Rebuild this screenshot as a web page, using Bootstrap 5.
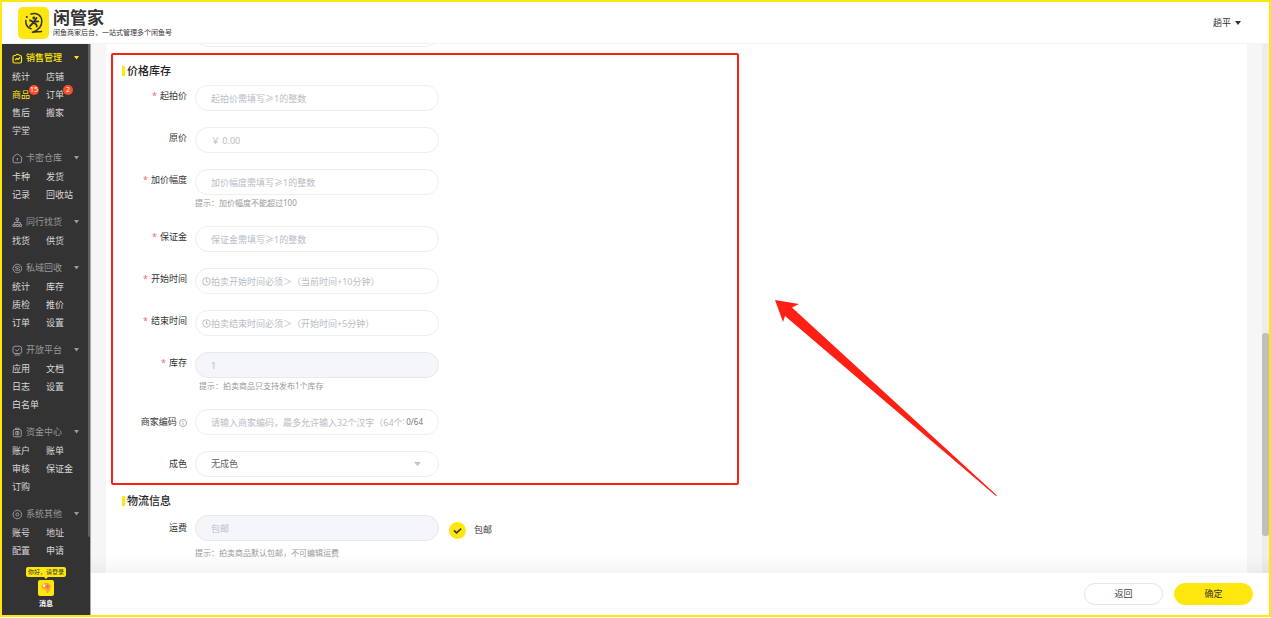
<!DOCTYPE html>
<html lang="zh-CN">
<head>
<meta charset="utf-8">
<meta name="viewport" content="width=device-width, initial-scale=1">
<title>闲管家</title>
<link href="https://cdn.jsdelivr.net/npm/bootstrap@5.3.0/dist/css/bootstrap.min.css" rel="stylesheet">
<style>
  :root { --brand: #ffe60f; --line: #eceef0; --ink: #333; --ghost: #b9bdc6; --alert: #ff2015; }
  body { font-family: "Noto Sans", "Noto Sans CJK SC", sans-serif; font-size: 9px; line-height: 18px; color: var(--ink); background: #fff; }
  a { text-decoration: none; color: inherit; }
  .app-wrap { height: 100vh; padding-bottom: 1px; }
  .app { height: 100%; border: 2px solid var(--brand); }

  .topbar { height: 42px; padding: 0 28px 0 16px; border-bottom: 1px solid #f3f3f3; }
  .brand-text { padding-top: 3px; }
  .brand-name { font-size: 17px; line-height: 18px; font-weight: 700; }
  .brand-sub { font-size: 7px; line-height: 12px; }
  .user-menu { font-size: 9px; line-height: 18px; color: var(--ink); }

  .side { width: 89px; background: #333; color: #d8d8d8; border-right: 1px solid #aaa; }
  .side-thumb { width: 2px; height: 493px; background: #606060; right: 0; top: 0; border-radius: 0 0 1px 1px; }
  .side-nav { padding: 4px 12px 0 10px; }
  .side-group { margin-bottom: 8px; }
  .side-head { height: 20px; color: #999; width: 67px; gap: 3px; }
  .side-head.active { color: var(--brand); font-weight: 500; }
  .side-links { display: grid; grid-template-columns: 34px 1fr; grid-auto-rows: 18px; white-space: nowrap; }
  .side-links a.active { color: var(--brand); }
  .count { position: absolute; top: -1px; left: 17px; min-width: 10px; height: 10px; border-radius: 5px; background: #ff4d26; color: #fff; font-size: 7px; line-height: 10px; text-align: center; }
  .bubble { background: var(--brand); color: #333; font-size: 6px; line-height: 10px; padding: 0 2px; border-radius: 2px; }
  .bubble-tip { border: 2px solid transparent; border-top-color: var(--brand); border-bottom: 0; margin-bottom: 1px; }
  .msg { font-size: 7px; line-height: 10px; color: #fff; font-weight: 700; padding-bottom: 6px; }
  .msg svg { margin-bottom: 3px; }

  .stage { background: #f6f6f6; min-height: 0; padding-left: 15px; }
  .sheet { background: #fff; margin-right: 15px; }
  .track { width: 7px; background: #ededed; padding-top: 289px; }
  .thumb { height: 203px; background: #bfbfbf; border-radius: 3px; }
  .fade-edge { height: 18px; bottom: 0; background: linear-gradient(rgba(0,0,0,0), rgba(0,0,0,.04)); pointer-events: none; }

  .peek { height: 3px; padding-left: 89px; }
  .peek-field { width: 244px; }
  .panel { margin-left: 5px; border: 2px solid transparent; width: 55%; }
  .panel.marked { border-color: var(--alert); border-radius: 2px; margin-top: 6px; padding: 6px 0; }
  .sec-title { font-size: 11px; line-height: 20px; margin: 0 0 4px 9px; font-weight: 500; color: #222; }
  .sec-title::before { content: ""; width: 3px; height: 10px; background: var(--brand); margin-right: 2px; }
  .item { display: grid; grid-template-columns: 74px 244px auto; column-gap: 8px; margin-bottom: 16px; }
  .item:last-child { margin-bottom: 0; }
  .item > label:first-child { text-align: right; line-height: 22px; }
  .item.level > label:first-child { line-height: 26px; }
  .need::before { content: "*"; color: #f56c6c; margin-right: 3px; }
  .pill { height: 26px; min-height: 26px; border: 1px solid var(--line); border-radius: 13px; font-size: 9px; line-height: 18px; padding: 0 15px; color: #666; width: 100%; }
  .pill::placeholder { color: var(--ghost); opacity: 1; }
  .pill:disabled { background: #f4f6fa; color: var(--ghost); border-color: #e6e8ec; }
  .pill.counted { padding-right: 34px; }
  select.pill { background-image: url("data:image/svg+xml,%3csvg xmlns='http://www.w3.org/2000/svg' viewBox='0 0 7 4'%3e%3cpath fill='%23c0c4cc' d='M0 0h7L3.5 4z'/%3e%3c/svg%3e"); background-size: 7px 4px; background-position: right 17px center; }
  .inner-icon { position: absolute; left: 7px; top: 9px; }
  .inner-count { position: absolute; right: 16px; top: 4px; font-size: 8px; color: #777; }
  .hint { font-size: 8px; line-height: 15px; color: #999; }
  .hint.inset { padding-left: 4px; }
  .free { height: 26px; padding-left: 2px; margin-top: 2px; }
  .free .form-check-input { width: 17px; height: 17px; margin: 0; border: 0; border-radius: 50%; }
  .free .form-check-input:checked { background-color: var(--brand); background-size: 15px; background-image: url("data:image/svg+xml,%3csvg xmlns='http://www.w3.org/2000/svg' viewBox='0 0 15 15'%3e%3cpath fill='none' stroke='%23333' stroke-width='1.6' d='M4 7.4l2.5 2.4L11.2 5.6'/%3e%3c/svg%3e"); }

  .arrow { left: 773px; top: 298px; pointer-events: none; }
  .foot { height: 42px; padding-right: 16px; gap: 11px; background: #fff; }
  .act { width: 79px; height: 22px; border-radius: 11px; font-size: 9px; line-height: 18px; padding: 0; border: 1px solid #e3e5e8; background: #fff; color: #444; }
  .act.main { background: var(--brand); border-color: var(--brand); color: #333; }
</style>
</head>
<body>
<div class="app-wrap">
<div class="app d-flex flex-column position-relative overflow-hidden">
  <header class="topbar d-flex align-items-center justify-content-between flex-shrink-0">
    <a href="#" class="d-flex align-items-center">
      <svg width="31" height="32" viewBox="0 0 31 32" class="me-1 flex-shrink-0" aria-hidden="true">
        <rect width="31" height="32" rx="5" fill="#ffe60f"/>
        <g fill="none" stroke="#333" stroke-linecap="round" stroke-linejoin="round">
          <path stroke-width="1.500" d="M7.800 13.500C7.600 17.500 9.500 20.800 13 21.800M13 7C18.500 5 23.600 8.500 23.800 14C24 19.500 20 23.300 14.500 25.200C17.500 24.300 20.500 24.800 23.500 24.600"/>
          <path stroke-width="1.800" d="M18.500 11L15.500 15.500L12 19M12 13.300L15.500 14.800L20.300 14.300M15.500 15.800L18.300 17.500L18.800 19.500"/>
        </g>
        <circle cx="15.800" cy="11" r="1.400" fill="#333"/><circle cx="8.800" cy="10" r="1" fill="#333"/>
      </svg>
      <span class="brand-text d-flex flex-column">
        <span class="brand-name">闲管家</span>
        <span class="brand-sub">闲鱼商家后台，一站式管理多个闲鱼号</span>
      </span>
    </a>
    <button type="button" class="user-menu btn p-0 border-0 d-flex align-items-center gap-1">趟平
      <svg width="6" height="4" viewBox="0 0 6 4" aria-hidden="true"><path d="M0 0h6L3 4z" fill="#333"/></svg>
    </button>
  </header>

  <div class="d-flex flex-grow-1" style="min-height:0">
    <aside class="side d-flex flex-column position-relative flex-shrink-0">
      <div class="side-thumb position-absolute"></div>
      <nav class="side-nav">
        <div class="side-group">
          <div class="side-head active d-flex align-items-center">
            <svg width="11" height="11" viewBox="0 0 11 11" fill="none" stroke="currentColor" stroke-width="1.200"><path d="M3.500 2.500H2.500Q1 2.500 1 4V8.500Q1 10 2.500 10H8Q9.500 10 9.500 8.500V4Q9.500 2.500 8 2.500H7.500M3.500 2.500Q5.500 0 7.500 2.500M3 7L4.800 5.500L6 6.500L8 4.500"/></svg>
            <span class="flex-grow-1">销售管理</span>
            <svg width="5" height="4" viewBox="0 0 5 4"><path d="M0 0h5L2.500 3.500z" fill="currentColor"/></svg>
          </div>
          <div class="side-links">
            <a href="#">统计</a><a href="#">店铺</a>
            <a href="#" class="active position-relative">商品<span class="count">15</span></a><a href="#" class="position-relative">订单<span class="count">2</span></a>
            <a href="#">售后</a><a href="#">搬家</a>
            <a href="#">学堂</a>
          </div>
        </div>
        <div class="side-group">
          <div class="side-head d-flex align-items-center">
            <svg width="11" height="11" viewBox="0 0 11 11" fill="none" stroke="currentColor"><path d="M1 5Q1 4 2 3.200L4.300 1.500Q5.300.8 6.300 1.500L8.600 3.200Q9.600 4 9.600 5V8Q9.600 9.800 7.800 9.800H2.800Q1 9.800 1 8zM5.300 5v2.500"/></svg>
            <span class="flex-grow-1">卡密仓库</span>
            <svg width="5" height="4" viewBox="0 0 5 4"><path d="M0 0h5L2.500 3.500z" fill="currentColor"/></svg>
          </div>
          <div class="side-links"><a href="#">卡种</a><a href="#">发货</a><a href="#">记录</a><a href="#">回收站</a></div>
        </div>
        <div class="side-group">
          <div class="side-head d-flex align-items-center">
            <svg width="11" height="11" viewBox="0 0 11 11" fill="none" stroke="currentColor"><path d="M4 1.200h2.500v2.300H4zM5.300 3.500v2M2.300 7.500V5.500h6v2M1 7.500h2.300v2H1zM4.200 7.500h2.200v2H4.200zM7.300 7.500h2.300v2H7.300z"/></svg>
            <span class="flex-grow-1">同行找货</span>
            <svg width="5" height="4" viewBox="0 0 5 4"><path d="M0 0h5L2.500 3.500z" fill="currentColor"/></svg>
          </div>
          <div class="side-links"><a href="#">找货</a><a href="#">供货</a></div>
        </div>
        <div class="side-group">
          <div class="side-head d-flex align-items-center">
            <svg width="11" height="11" viewBox="0 0 11 11" fill="none" stroke="currentColor"><circle cx="5.300" cy="5.500" r="4.300"/><path d="M3.300 5V3.800h3.500q.8 0 .8 1M7.400 6v1.200H4q-.8 0-.8-1M4.300 5.500h2"/></svg>
            <span class="flex-grow-1">私域回收</span>
            <svg width="5" height="4" viewBox="0 0 5 4"><path d="M0 0h5L2.500 3.500z" fill="currentColor"/></svg>
          </div>
          <div class="side-links"><a href="#">统计</a><a href="#">库存</a><a href="#">质检</a><a href="#">推价</a><a href="#">订单</a><a href="#">设置</a></div>
        </div>
        <div class="side-group">
          <div class="side-head d-flex align-items-center">
            <svg width="11" height="11" viewBox="0 0 11 11" fill="none" stroke="currentColor"><rect x="1" y="1.200" width="8.600" height="7.300" rx="2"/><path d="M3.300 4.700L5 6.200L7.600 3.500M2.500 10h5.600"/></svg>
            <span class="flex-grow-1">开放平台</span>
            <svg width="5" height="4" viewBox="0 0 5 4"><path d="M0 0h5L2.500 3.500z" fill="currentColor"/></svg>
          </div>
          <div class="side-links"><a href="#">应用</a><a href="#">文档</a><a href="#">日志</a><a href="#">设置</a><a href="#">白名单</a></div>
        </div>
        <div class="side-group">
          <div class="side-head d-flex align-items-center">
            <svg width="11" height="11" viewBox="0 0 11 11" fill="none" stroke="currentColor"><path d="M3.500 2.500V1.200h3.600v1.300"/><rect x="1.300" y="2.500" width="8" height="7.300" rx="1.500"/><path d="M3.800 4.500h3v3.300h-3zM5.300 4.500v3.300"/></svg>
            <span class="flex-grow-1">资金中心</span>
            <svg width="5" height="4" viewBox="0 0 5 4"><path d="M0 0h5L2.500 3.500z" fill="currentColor"/></svg>
          </div>
          <div class="side-links"><a href="#">账户</a><a href="#">账单</a><a href="#">审核</a><a href="#">保证金</a><a href="#">订购</a></div>
        </div>
        <div class="side-group mb-0">
          <div class="side-head d-flex align-items-center">
            <svg width="11" height="11" viewBox="0 0 11 11" fill="none" stroke="currentColor"><circle cx="5.300" cy="5.500" r="4.300"/><circle cx="5.300" cy="5.500" r="1.500"/></svg>
            <span class="flex-grow-1">系统其他</span>
            <svg width="5" height="4" viewBox="0 0 5 4"><path d="M0 0h5L2.500 3.500z" fill="currentColor"/></svg>
          </div>
          <div class="side-links"><a href="#">账号</a><a href="#">地址</a><a href="#">配置</a><a href="#">申请</a></div>
        </div>
      </nav>
      <a href="#" class="msg mt-auto d-flex flex-column align-items-center">
        <span class="bubble fw-normal">你好，请登录</span>
        <span class="bubble-tip"></span>
        <svg width="16" height="16" viewBox="0 0 16 16" aria-hidden="true"><rect width="16" height="16" rx="2" fill="#ffe60f"/><path d="M3.500 6Q5 2.500 9 3Q13 3.500 12.500 7.500Q12 11.500 8.500 13.500Q9.500 11 8 9.500Q4 9.500 3.500 6z" fill="#ff9a3c"/><circle cx="6" cy="5.800" r="1.300" fill="#fff"/><circle cx="9.500" cy="6.500" r="1.200" fill="#ff5a3c"/></svg>
        <span>消息</span>
      </a>
    </aside>

    <div class="d-flex flex-column flex-grow-1" style="min-width:0">
      <main class="stage d-flex flex-grow-1 position-relative overflow-hidden">
        <form class="sheet flex-grow-1" id="goods">
          <div class="peek d-flex align-items-end overflow-hidden">
            <div class="peek-field"><input class="form-control pill" type="text" aria-label="商品信息"></div>
          </div>
          <section class="panel marked">
            <h2 class="sec-title d-flex align-items-center">价格库存</h2>
            <div class="item"><label class="need" for="f1">起拍价</label><div><input id="f1" class="form-control pill" placeholder="起拍价需填写≥1的整数"></div></div>
            <div class="item"><label for="f2">原价</label><div><input id="f2" class="form-control pill" placeholder="￥ 0.00"></div></div>
            <div class="item"><label class="need" for="f3">加价幅度</label><div><input id="f3" class="form-control pill" placeholder="加价幅度需填写≥1的整数"><div class="hint">提示：加价幅度不能超过100</div></div></div>
            <div class="item"><label class="need" for="f4">保证金</label><div><input id="f4" class="form-control pill" placeholder="保证金需填写≥1的整数"></div></div>
            <div class="item"><label class="need" for="f5">开始时间</label><div class="position-relative"><input id="f5" class="form-control pill" placeholder="拍卖开始时间必须＞（当前时间+10分钟）">
              <svg class="inner-icon" width="9" height="9" viewBox="0 0 9 9" fill="none" stroke="#b9bdc6"><circle cx="4.500" cy="4.500" r="3.800"/><path d="M4.500 2v3H6.500"/></svg></div></div>
            <div class="item"><label class="need" for="f6">结束时间</label><div class="position-relative"><input id="f6" class="form-control pill" placeholder="拍卖结束时间必须＞（开始时间+5分钟）">
              <svg class="inner-icon" width="9" height="9" viewBox="0 0 9 9" fill="none" stroke="#b9bdc6"><circle cx="4.500" cy="4.500" r="3.800"/><path d="M4.500 2v3H6.500"/></svg></div></div>
            <div class="item"><label class="need" for="f7">库存</label><div><input id="f7" class="form-control pill" value="1" disabled><div class="hint inset">提示：拍卖商品只支持发布1个库存</div></div></div>
            <div class="item level"><label for="f8">商家编码
              <svg width="8" height="8" viewBox="0 0 8 8" fill="none" stroke="#999" stroke-width=".8"><circle cx="4" cy="4" r="3.500"/><path d="M4 3.500v2.500M4 2v.8"/></svg></label>
              <div class="position-relative"><input id="f8" class="form-control pill counted" placeholder="请输入商家编码，最多允许输入32个汉字（64个字符）"><span class="inner-count">0/64</span></div></div>
            <div class="item level"><label for="f9">成色</label><div><select id="f9" class="form-select pill"><option>无成色</option></select></div></div>
          </section>
          <section class="panel pt-1">
            <h2 class="sec-title d-flex align-items-center">物流信息</h2>
            <div class="item level"><label for="f10">运费</label>
              <div><input id="f10" class="form-control pill" placeholder="包邮" disabled><div class="hint pt-1">提示：拍卖商品默认包邮，不可编辑运费</div></div>
              <div class="free d-flex align-items-center align-self-start"><input class="form-check-input" type="checkbox" id="free" checked><label for="free" class="ps-2">包邮</label></div>
            </div>
          </section>
        </form>
        <div class="track flex-shrink-0"><div class="thumb"></div></div>
        <div class="fade-edge position-absolute start-0 end-0"></div>
      </main>
      <footer class="foot d-flex align-items-center justify-content-end flex-shrink-0">
        <button type="button" class="btn act">返回</button>
        <button type="submit" form="goods" class="btn act main">确定</button>
      </footer>
    </div>
  </div>
  <svg class="arrow position-absolute" width="224" height="198" viewBox="0 0 224 198" aria-hidden="true"><path d="M0 0L24 4L17 7.500L222 195.500L221 196L10 16L8 22z" fill="#ff2015"/></svg>
</div>
</div>
<script src="https://cdn.jsdelivr.net/npm/bootstrap@5.3.0/dist/js/bootstrap.bundle.min.js"></script>
</body>
</html>
